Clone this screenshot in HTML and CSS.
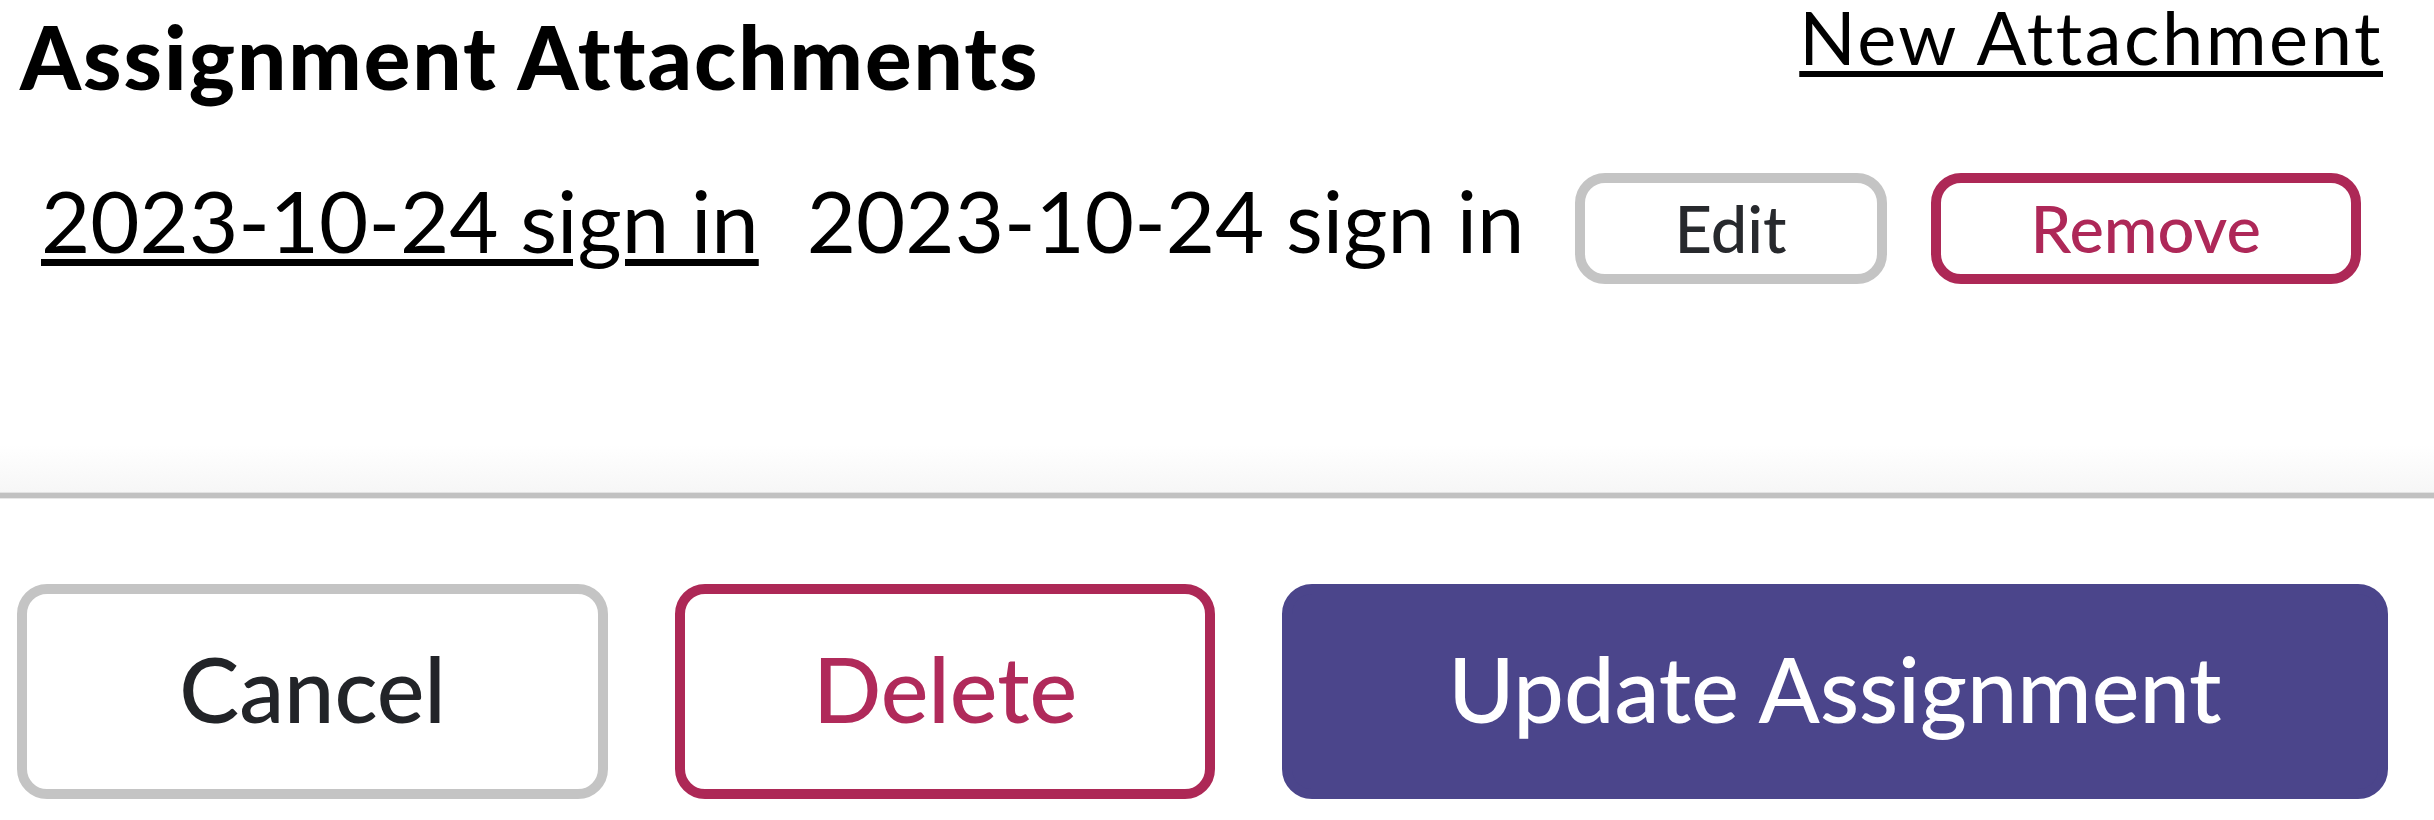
FILE: index.html
```html
<!DOCTYPE html>
<html>
  <head>
    <title>Edit Assignment</title>
    <meta name="viewport" content="width=device-width, initial-scale=1" />
    <link rel="stylesheet" href="styles.css">
  </head>
  <body>
    <section class="attachments">
      <div class="attachments-head">
        <h3>Assignment Attachments</h3>
        <a href="#" class="new-link">New Attachment</a>
      </div>
      <ul class="attachment-list">
        <li class="attachment">
          <a href="#" class="attachment-link">2023-10-24 sign in</a>
          <span class="attachment-name">2023-10-24 sign in</span>
          <button class="btn-small">Edit</button>
          <button class="btn-small btn-small-danger">Remove</button>
        </li>
      </ul>
    </section>
    <footer class="form-actions">
      <button class="btn btn-cancel">Cancel</button>
      <button class="btn btn-delete">Delete</button>
      <button class="btn btn-primary">Update Assignment</button>
    </footer>
  </body>
</html>
```

FILE: styles.css
```css
html {
  font-family: Lato, "Noto Sans", sans-serif;
  color: #000;
}
body {
  margin: 0;
  background: #fff;
}
button {
  font-family: inherit;
  cursor: pointer;
}

/* attachments block */
.attachments {
  padding: 0 0 209px 20px;
  background: linear-gradient(#fff calc(100% - 48px), #f6f6f6);
}
.attachments-head {
  display: flex;
  justify-content: space-between;
  align-items: flex-start;
  padding: 4px 51px 0 0;
}
.attachments-head h3 {
  margin: 9px 0 0;
  font-size: 87px;
  font-weight: 900;
  line-height: 1;
  letter-spacing: 2px;
  white-space: nowrap;
}
.new-link {
  margin-top: -4px;
  font-size: 74px;
  line-height: 1;
  letter-spacing: 2.5px;
  color: #000;
  white-space: nowrap;
  text-decoration-thickness: 6px;
  text-underline-offset: 6px;
}
.attachment-list {
  list-style: none;
  margin: 73px 0 0;
  padding: 0 0 0 21px;
}
.attachment {
  display: flex;
  align-items: baseline;
  font-size: 85px;
  line-height: 1;
  white-space: nowrap;
}
.attachment > * {
  flex-shrink: 0;
}
.attachment-link {
  color: #000;
  margin-right: 48px;
  text-decoration-thickness: 7px;
  text-underline-offset: 6px;
}
.attachment-name {
  margin-right: 50px;
}
.btn-small {
  font-size: 65px;
  font-weight: 500;
  line-height: 1;
  padding: 13px 90px;
  border: 10px solid #c4c4c4;
  border-radius: 30px;
  background: #fff;
  color: #27292d;
  margin-right: 44px;
}
.btn-small-danger {
  border-color: #ad2856;
  color: #ae2858;
}

/* bottom action bar */
.form-actions {
  display: grid;
  grid-template-columns: 591px 540px 1fr;
  gap: 67px;
  padding: 86px 46px 0 17px;
  border-top: 5px solid #c1c1c1;
  box-shadow: 0 -1px 0 #e2e2e2, inset 0 1px 0 #e8e8e8;
}
.btn {
  font-size: 90px;
  font-weight: 500;
  line-height: 1;
  padding: 49px 20px 56px;
  border: 10px solid #c4c4c4;
  border-radius: 30px;
  background: #fff;
  color: #222428;
}
.btn-delete {
  border-color: #ad2856;
  color: #b02a5a;
}
.btn-primary {
  border-color: #4b458b;
  background: #4b458b;
  color: #fff;
}
```
